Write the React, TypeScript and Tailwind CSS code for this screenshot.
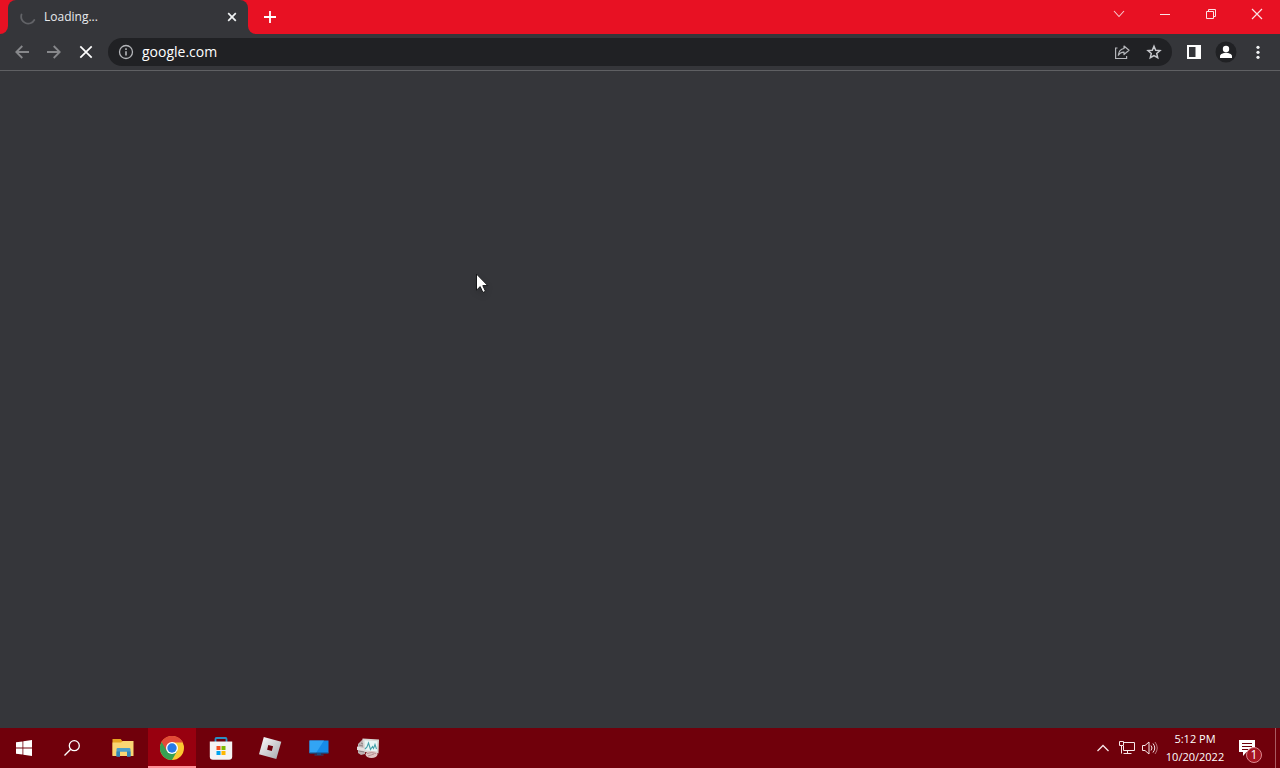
import type { ReactNode } from "react";

type IconButtonProps = { label: string; className?: string; children: ReactNode };

function IconButton({ label, className = "", children }: IconButtonProps) {
  return (
    <button type="button" aria-label={label} className={`flex shrink-0 items-center justify-center ${className}`}>
      {children}
    </button>
  );
}

function TabStrip() {
  return (
    <header className="flex h-[34px] shrink-0 bg-[#35363a]">
      <div className="w-2 rounded-br-lg bg-[#e81123]" />
      <div className="w-60 bg-[#e81123]">
        <div className="flex h-full items-center rounded-t-lg bg-[#35363a] pr-2 pl-3">
          <svg className="size-4" viewBox="0 0 16 16" fill="none" stroke="#626367" strokeWidth="1.8" strokeLinecap="round">
            <path d="M1.500 5.500A7 7 0 0 0 14.300 11" />
          </svg>
          <span className="ml-2 flex-1 text-xs text-[#e8eaed]">Loading...</span>
          <IconButton label="Close tab" className="size-4">
            <svg className="size-4" viewBox="0 0 16 16" stroke="#f1f3f4" strokeWidth="1.7">
              <path d="M4.200 4.200l7.600 7.600M11.800 4.200l-7.600 7.600" />
            </svg>
          </IconButton>
        </div>
      </div>
      <div className="flex flex-1 items-start rounded-bl-lg bg-[#e81123]">
        <IconButton label="New tab" className="ml-2 h-[34px] w-7">
          <svg className="size-4" viewBox="0 0 16 16" stroke="#ffffff" strokeWidth="1.8">
            <path d="M8 2v12M2 8h12" />
          </svg>
        </IconButton>
        <div className="ml-auto flex">
          <IconButton label="Search tabs" className="h-7 w-[46px]">
            <svg className="size-3" viewBox="0 0 12 12" fill="none" stroke="#f7c9cd" strokeWidth="1.1">
              <path d="M1 3l5 5.500L11 3" />
            </svg>
          </IconButton>
          <IconButton label="Minimize" className="h-7 w-[46px]">
            <svg className="size-3" viewBox="0 0 12 12" stroke="#fbe3e5" strokeWidth="1">
              <path d="M1 6.500h10" />
            </svg>
          </IconButton>
          <IconButton label="Restore" className="h-7 w-[46px]">
            <svg className="size-3" viewBox="0 0 12 12" fill="none" stroke="#fbe3e5" strokeWidth="1">
              <path d="M1.500 3.500h7v7h-7zM3.500 3.500v-2h7v7h-2" />
            </svg>
          </IconButton>
          <IconButton label="Close window" className="h-7 w-[46px]">
            <svg className="size-3" viewBox="0 0 12 12" stroke="#fbe3e5" strokeWidth="1.200">
              <path d="M1 1l10 10M11 1L1 11" />
            </svg>
          </IconButton>
        </div>
      </div>
    </header>
  );
}

function Toolbar() {
  return (
    <nav className="flex h-[37px] shrink-0 items-center border-b border-[#5f6063] bg-[#35363a] px-1.5">
      <IconButton label="Back" className="size-8">
        <svg className="size-4" viewBox="0 0 16 16" fill="none" stroke="#87888b" strokeWidth="1.800">
          <path d="M15 8H2.500M8.300 2L2.300 8l6 6" />
        </svg>
      </IconButton>
      <IconButton label="Forward" className="size-8">
        <svg className="size-4" viewBox="0 0 16 16" fill="none" stroke="#87888b" strokeWidth="1.800">
          <path d="M1 8h12.500M7.700 2l6 6-6 6" />
        </svg>
      </IconButton>
      <IconButton label="Stop loading" className="size-8">
        <svg className="size-4" viewBox="0 0 16 16" stroke="#ffffff" strokeWidth="1.700">
          <path d="M2.300 2.300l11.400 11.400M13.700 2.300L2.300 13.700" />
        </svg>
      </IconButton>
      <div className="ml-1.5 flex h-7 flex-1 items-center rounded-full bg-[#202124] pr-0.5 pl-2.5">
        <IconButton label="View site information" className="size-4">
          <svg className="size-4" viewBox="0 0 16 16" fill="none" stroke="#b4b6ba" strokeWidth="1.300">
            <circle cx="8" cy="8" r="6.500" />
            <path d="M8 7.200v4.300M8 4.300v1.600" strokeWidth="1.600" />
          </svg>
        </IconButton>
        <input
          aria-label="Address"
          defaultValue="google.com"
          className="ml-2 min-w-0 flex-1 bg-transparent text-sm text-white outline-none"
        />
        <IconButton label="Share" className="size-8">
          <svg className="size-4" viewBox="0 0 16 16" fill="none" stroke="#b4b6ba" strokeWidth="1.200">
            <path d="M3.500 4H1.600v10.500h11V12" />
            <path d="M10 2l5 4.300-5 4.200V8.100C7.400 8 5.600 9 4.300 11.300 4.700 7.500 6.700 5 10 4.500z" strokeLinejoin="round" />
          </svg>
        </IconButton>
        <IconButton label="Bookmark this tab" className="size-8">
          <svg className="size-4" viewBox="0 0 16 16" fill="none" stroke="#c6c8cc" strokeWidth="1.500">
            <path d="M8 2.200l1.700 4 4.300.4-3.300 2.900 1 4.200L8 11.500l-3.700 2.200 1-4.200L2 6.600l4.300-.4z" />
          </svg>
        </IconButton>
      </div>
      <IconButton label="Side panel" className="ml-1.5 size-8">
        <svg className="size-4" viewBox="0 0 16 16">
          <path fillRule="evenodd" fill="#ffffff" d="M1 1h14v14H1zM3 3v10h6.500V3z" />
        </svg>
      </IconButton>
      <IconButton label="Profile" className="size-8">
        <svg className="size-6" viewBox="0 0 24 24">
          <circle cx="12" cy="12" r="10.500" fill="#202124" />
          <circle cx="12" cy="9" r="3.200" fill="#ffffff" />
          <path d="M6 18v-1.800c0-2.200 3.700-3.400 6-3.400s6 1.200 6 3.400V18z" fill="#ffffff" />
        </svg>
      </IconButton>
      <IconButton label="Menu" className="size-8">
        <svg className="size-4" viewBox="0 0 16 16" fill="#f1f3f4">
          <circle cx="8" cy="3.300" r="1.600" />
          <circle cx="8" cy="8.300" r="1.600" />
          <circle cx="8" cy="13.300" r="1.600" />
        </svg>
      </IconButton>
    </nav>
  );
}

function WindowsIcon() {
  return (
    <svg className="size-4" viewBox="0 0 16 16" fill="#ffffff">
      <path d="M0 2.300l6.500-.9v6.100H0zM7.300 1.300L16 0v7.500H7.300zM0 8.400h6.500v6.200L0 13.700zM7.300 8.400H16V16l-8.700-1.300z" />
    </svg>
  );
}

function SearchIcon() {
  return (
    <svg className="size-4" viewBox="0 0 16 16" fill="none" stroke="#ffffff" strokeWidth="1.300">
      <circle cx="10.300" cy="5.700" r="5" />
      <path d="M6.700 9.300L.5 15.500" />
    </svg>
  );
}

function FolderIcon() {
  return (
    <svg className="size-6" viewBox="0 0 24 24">
      <path d="M1.500 3h8.200l1.500 2H22v14.500H1.500z" fill="#e8a521" />
      <path d="M1.500 6.500H10L12 5h10.500v15H1.500z" fill="#fad673" />
      <path d="M5.500 13.300q0-1.300 1.300-1.300h11.400q1.300 0 1.300 1.300v7.200H16v-4.800H9v4.800H5.500z" fill="#4b9fc9" />
      <path d="M5.500 15.500H9v5H5.500zM16 15.500h3.500v5H16z" fill="#3187b8" />
    </svg>
  );
}

function ChromeIcon() {
  return (
    <svg className="size-6" viewBox="0 0 24 24">
      <circle cx="12" cy="12" r="12" fill="#fbc832" />
      <path d="M12 12L1.600 6A12 12 0 0 0 12 24l5.200-9z" fill="#36a053" />
      <path d="M12 6.500h10.700A12 12 0 0 0 1.600 6l5.200 9L12 12z" fill="#e34a38" />
      <circle cx="12" cy="12" r="6" fill="#ffffff" />
      <circle cx="12" cy="12" r="4.700" fill="#287ae6" />
    </svg>
  );
}

function StoreIcon() {
  return (
    <svg className="size-6" viewBox="0 0 24 24">
      <path d="M6.500 6.500V3q0-1 1-1h9q1 0 1 1v3.500" fill="none" stroke="#2c8fc4" strokeWidth="1.800" />
      <path d="M.8 5.500h22.400v15q0 3.200-3.200 3.200H4q-3.200 0-3.200-3.200z" fill="#f4f4f4" />
      <path d="M7.500 10h4v4h-4z" fill="#f25022" />
      <path d="M12.500 10h4v4h-4z" fill="#7fba00" />
      <path d="M7.500 15h4v4h-4z" fill="#00a4ef" />
      <path d="M12.500 15h4v4h-4z" fill="#ffb900" />
    </svg>
  );
}

function RobloxIcon() {
  return (
    <svg className="size-6" viewBox="0 0 24 24">
      <defs>
        <linearGradient id="roblox-metal" x1="0" y1="0" x2="1" y2="1">
          <stop offset="0" stopColor="#ffffff" />
          <stop offset="1" stopColor="#a3a5ab" />
        </linearGradient>
      </defs>
      <path fillRule="evenodd" fill="url(#roblox-metal)" d="M5.800 1L23.300 5.700 18.300 23 1 18.300zM10.300 9.100L9.100 13.700l4.700 1.300 1.300-4.700z" />
    </svg>
  );
}

function DesktopIcon() {
  return (
    <svg className="size-6" viewBox="0 0 24 24">
      <path d="M2.500 4.500h19v12.500h-19z" fill="#168be8" />
      <path d="M2.500 4.500H17L9 17H2.500z" fill="#32a4f4" />
      <path d="M2.500 16.500h19v1.200h-19zM10 17.500h4v1.500h-4zM7.500 18.500h9v1h-9z" fill="#174f83" />
    </svg>
  );
}

function MonitorIcon() {
  return (
    <svg className="size-6" viewBox="0 0 24 24">
      <path d="M2 8l5-5 2 1v14l-4 1-3-2z" fill="#bfb4b5" />
      <path d="M6.500 2.500L23 3.500l-.5 14L8 16z" fill="#d8d6d4" />
      <path d="M8.500 4.300l12.800.9-.4 10.300L9 14.300z" fill="#e9f5f5" />
      <path d="M9 13l2-2 1.500-4 2 6.500 2-3 1 2 1.500-4 1.500 4.500" fill="none" stroke="#45a1ab" strokeWidth="1.100" />
      <path d="M1 10.500l7 1.500v3l-7-1z" fill="#e5dfdf" />
      <path d="M2.500 15l6 1M5 7l2 1M3 9l4 1" stroke="#81777a" strokeWidth=".8" />
      <ellipse cx="15.500" cy="18.500" rx="6" ry="3.500" fill="#dfc5c4" />
      <path d="M11 17.500q4.500-2 9 0M12 20l6-2" fill="none" stroke="#ab8788" strokeWidth=".8" />
    </svg>
  );
}

const apps = [
  { label: "Start", icon: <WindowsIcon />, style: "w-12" },
  { label: "Search", icon: <SearchIcon />, style: "w-12" },
  { label: "File Explorer", icon: <FolderIcon />, style: "ml-0.5 w-[50px]" },
  { label: "Google Chrome", icon: <ChromeIcon />, style: "w-12 border-b-2 border-[#ff8d96] bg-[#98000f] pt-0.5" },
  { label: "Microsoft Store", icon: <StoreIcon />, style: "w-[49px]" },
  { label: "Roblox", icon: <RobloxIcon />, style: "w-[49px]" },
  { label: "Remote Desktop", icon: <DesktopIcon />, style: "w-[49px]" },
  { label: "Resource Monitor", icon: <MonitorIcon />, style: "w-[49px]" },
];

function Taskbar() {
  return (
    <footer className="flex h-10 shrink-0 items-stretch bg-[#70000b]">
      {apps.map((app) => (
        <IconButton key={app.label} label={app.label} className={app.style}>
          {app.icon}
        </IconButton>
      ))}
      <div className="ml-auto flex">
        <IconButton label="Show hidden icons" className="w-6">
          <svg className="h-4 w-3.5" viewBox="0 0 14 16" fill="none" stroke="#f7e6e8" strokeWidth="1.300">
            <path d="M1.500 11L7 5.500l5.500 5.500" />
          </svg>
        </IconButton>
        <IconButton label="Network" className="w-6">
          <svg className="size-4" viewBox="0 0 16 16" fill="none" stroke="#f7e6e8" strokeWidth="1">
            <path d="M5 2.500h10.500v8H4.500V6M8.500 10.500v3M4.500 13.500h8" />
            <path d="M.5 1.500h4v4h-4zM2.500 5.500v8" />
          </svg>
        </IconButton>
        <IconButton label="Volume" className="w-[22px]">
          <svg className="size-4" viewBox="0 0 16 16" fill="none" stroke="#f7e6e8" strokeWidth="1">
            <path d="M.5 5.500h2.500l4-3.500v12l-4-3.500H.5z" />
            <path d="M9 5.500q2 2.500 0 5M11 3.500q3.500 4.500 0 9" />
            <path d="M13 2q4.500 6 0 12" stroke="#b8747b" />
          </svg>
        </IconButton>
        <button type="button" className="flex w-[68px] flex-col items-center justify-center text-[11px] leading-[18px] text-white">
          <span>5:12 PM</span>
          <span>10/20/2022</span>
        </button>
        <IconButton label="Notifications, 1 new" className="w-[46px]">
          <span className="relative mr-2.5 flex">
            <svg className="size-[18px]" viewBox="0 0 18 18">
              <path d="M1 1h16v12H8.500L5 17v-4H1z" fill="#ffffff" />
              <path d="M4 4.500h10M4 7.500h10M4 10.500h6" stroke="#70000b" />
            </svg>
            <span className="absolute top-2 left-2 flex size-4 items-center justify-center rounded-full border border-[#dc8890] bg-[#a51420] text-xs leading-3 text-white">
              1
            </span>
          </span>
        </IconButton>
        <button type="button" aria-label="Show desktop" className="w-[5px] border-l border-[#a95a62]" />
      </div>
    </footer>
  );
}

export default function App() {
  return (
    <div className="flex h-screen flex-col overflow-hidden bg-[#35363a] font-['Open_Sans','Noto_Sans',sans-serif]">
      <TabStrip />
      <Toolbar />
      <main className="relative flex-1">
        <svg className="absolute top-[202px] left-[475px] h-6 w-4 drop-shadow-md" viewBox="0 0 16 24">
          <path d="M1.500 1v16.200l3.700-3.600 2.700 5.900 2.600-1.200-2.700-5.700h5z" fill="#ffffff" stroke="#17181a" />
        </svg>
      </main>
      <Taskbar />
    </div>
  );
}
